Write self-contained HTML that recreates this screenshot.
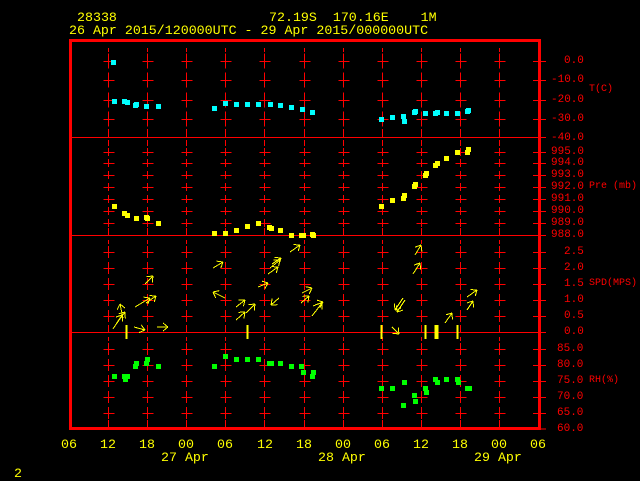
<!DOCTYPE html>
<html><head><meta charset="utf-8"><style>
html,body{margin:0;padding:0;background:#000;width:640px;height:480px;overflow:hidden}
.t{position:absolute;font-family:"Liberation Mono",monospace;white-space:pre;line-height:1}
.y{color:#ffff00;font-size:13.3px}
.r{color:#ff0000;font-size:11px}
.rl{color:#ff0000;font-size:10px}
</style></head><body>
<svg id="s" width="640" height="480" style="position:absolute;left:0;top:0" shape-rendering="crispEdges"></svg>
<div class="t y" style="left:77px;top:11px">28338</div>
<div class="t y" style="left:269px;top:11px">72.19S  170.16E    1M</div>
<div class="t y" style="left:69px;top:24px">26 Apr 2015/120000UTC - 29 Apr 2015/000000UTC</div>

<div class="t r" style="left:564px;top:56px">0.0</div>
<div class="t r" style="left:551px;top:75px">-10.0</div>
<div class="t r" style="left:551px;top:95px">-20.0</div>
<div class="t r" style="left:551px;top:114px">-30.0</div>
<div class="t r" style="left:551px;top:133px">-40.0</div>
<div class="t rl" style="left:589px;top:85px">T(C)</div>

<div class="t r" style="left:551px;top:147px">995.0</div>
<div class="t r" style="left:551px;top:158px">994.0</div>
<div class="t r" style="left:551px;top:170px">993.0</div>
<div class="t r" style="left:551px;top:182px">992.0</div>
<div class="t r" style="left:551px;top:194px">991.0</div>
<div class="t r" style="left:551px;top:206px">990.0</div>
<div class="t r" style="left:551px;top:218px">989.0</div>
<div class="t r" style="left:551px;top:230px">988.0</div>
<div class="t rl" style="left:589px;top:182px">Pre (mb)</div>

<div class="t r" style="left:564px;top:247px">2.5</div>
<div class="t r" style="left:564px;top:263px">2.0</div>
<div class="t r" style="left:564px;top:279px">1.5</div>
<div class="t r" style="left:564px;top:295px">1.0</div>
<div class="t r" style="left:564px;top:311px">0.5</div>
<div class="t r" style="left:564px;top:327px">0.0</div>
<div class="t rl" style="left:589px;top:279px">SPD(MPS)</div>

<div class="t r" style="left:557px;top:344px">85.0</div>
<div class="t r" style="left:557px;top:360px">80.0</div>
<div class="t r" style="left:557px;top:376px">75.0</div>
<div class="t r" style="left:557px;top:392px">70.0</div>
<div class="t r" style="left:557px;top:408px">65.0</div>
<div class="t r" style="left:557px;top:424px">60.0</div>
<div class="t rl" style="left:589px;top:376px">RH(%)</div>

<div class="t y" style="left:61px;top:438px">06</div>
<div class="t y" style="left:100px;top:438px">12</div>
<div class="t y" style="left:139px;top:438px">18</div>
<div class="t y" style="left:178px;top:438px">00</div>
<div class="t y" style="left:217px;top:438px">06</div>
<div class="t y" style="left:257px;top:438px">12</div>
<div class="t y" style="left:296px;top:438px">18</div>
<div class="t y" style="left:335px;top:438px">00</div>
<div class="t y" style="left:374px;top:438px">06</div>
<div class="t y" style="left:413px;top:438px">12</div>
<div class="t y" style="left:452px;top:438px">18</div>
<div class="t y" style="left:491px;top:438px">00</div>
<div class="t y" style="left:530px;top:438px">06</div>
<div class="t y" style="left:161px;top:451px">27 Apr</div>
<div class="t y" style="left:318px;top:451px">28 Apr</div>
<div class="t y" style="left:474px;top:451px">29 Apr</div>
<div class="t y" style="left:14px;top:467px">2</div>
<script>
var s=document.getElementById('s'),h='';
function L(a,b,c,d,col,w){h+='<line x1="'+a+'" y1="'+b+'" x2="'+c+'" y2="'+d+'" stroke="'+(col||'#f00')+'" stroke-width="'+(w||1)+'"/>';}
function R(x,y,w,hh,col){h+='<rect x="'+x+'" y="'+y+'" width="'+w+'" height="'+hh+'" fill="'+col+'"/>';}
R(69,39,472,3,'#f00');R(69,427,472,3,'#f00');R(69,39,3,391,'#f00');R(538,39,3,391,'#f00');
R(72,137,466,1,'#f00');R(72,235,466,1,'#f00');R(72,332,466,1,'#f00');
var xs=[];for(var k=0;k<11;k++)xs.push(Math.round(108+k*39.1)+0.5);
var panels=[[61,80,100,119],[152,163,175,187,199,211,223],[252,268,284,300,316],[349,365,381,397,413]];
var sp=[19.3,12,16,16];
panels.forEach(function(p,i){
 p.forEach(function(y){
  xs.forEach(function(x){L(x,y-sp[i]/2+2,x,y+sp[i]/2-2);L(x-5,y+.5,x+6,y+.5);});
  L(533,y+.5,546,y+.5);
 });
});
[137.5,235.5,332.5,429].forEach(function(y){L(533,y,546,y);});
xs.forEach(function(x){L(x,48,x,52);L(x,129,x,137);L(x,140,x,146);L(x,228,x,235);L(x,240,x,244);L(x,325,x,332);L(x,337,x,341);L(x,420,x,427);});
function pts(a,c){for(var i=0;i<a.length;i+=2)R(a[i]-2,a[i+1]-2,5,5,c);}
pts([113,62,114,101,124,101,127,102,135,105,136,104,146,106,158,106,214,108,225,103,236,104,247,104,258,104,270,104,280,105,291,107,302,109,312,112,381,119,392,117,403,116,404,121,414,112,415,111,425,113,435,113,437,112,446,113,457,113,467,111,468,110],'#00ffff');
pts([114,206,124,213,127,215,136,218,146,217,147,218,158,223,214,233,225,233,236,230,247,226,258,223,269,227,271,228,280,230,291,235,301,235,303,235,312,234,313,235,381,206,392,200,403,198,404,195,414,186,415,184,425,175,426,173,435,165,437,163,446,158,457,152,467,152,468,149],'#ffff00');
pts([114,376,124,376,127,376,125,379,135,366,136,363,146,363,147,359,158,366,214,366,225,356,236,359,247,359,258,359,269,363,271,363,280,363,291,366,301,366,303,372,313,372,312,376,381,388,392,388,404,382,403,405,414,395,415,401,425,388,426,392,435,379,437,382,446,379,457,379,458,382,467,388,469,388],'#00ff00');
function A(a,b,c,d){var Y='#ff0';L(a,b,c,d,Y);var dx=c-a,dy=d-b,l=Math.sqrt(dx*dx+dy*dy),ux=dx/l,uy=dy/l;
 L(c,d,c-ux*5-uy*4,d-uy*5+ux*4,Y);L(c,d,c-ux*5+uy*4,d-uy*5-ux*4,Y);}
var ar=[[113,329,122,315],[117,323,125,312],[123,318,120,304],[134,327,145,330],[157,327,168,327],[145,284,153,276],[135,307,150,298],[146,303,156,296],[225,298,213,292],[213,268,223,262],[236,320,245,312],[236,307,245,300],[246,313,255,304],[258,287,268,283],[279,298,271,305],[268,274,278,267],[270,268,280,260],[272,264,281,258],[290,252,300,245],[301,303,309,296],[302,293,312,288],[312,316,322,303],[313,306,323,302],[415,255,421,245],[413,274,420,263],[403,298,395,310],[405,300,397,312],[392,327,399,334],[445,323,452,313],[467,310,473,301],[467,297,477,290]];
ar.forEach(function(a){A(a[0],a[1],a[2],a[3]);});
[126,247,381,425,435,437,457].forEach(function(x){L(x+.5,325,x+.5,339,'#ff0',2);});
s.innerHTML=h;
</script>
</body></html>
